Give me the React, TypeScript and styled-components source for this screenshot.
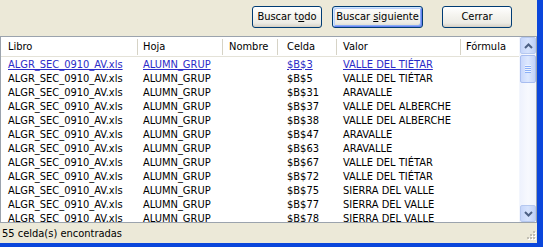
import React from 'react';
import styled, { createGlobalStyle, css } from 'styled-components';

const GlobalStyle = createGlobalStyle`
  html, body {
    margin: 0;
    padding: 0;
    background: #0a46db;
  }
  body {
    font-family: "DejaVu Sans Condensed", "DejaVu Sans", sans-serif;
    font-size: 11px;
  }
`;

const vars = {
  face: '#ece9d8',
  text: '#000000',
  link: '#2b2bc8',
  listBorder: '#9ba3ad',
  headSep: '#d6d3c6',
  frame: '#0a46db',
};

type Col = { w: number; pl: number };

const COLS: Col[] = [
  { w: 137, pl: 7 },
  { w: 85, pl: 5 },
  { w: 55, pl: 6 },
  { w: 59, pl: 9 },
  { w: 124, pl: 6 },
  { w: 58, pl: 5 },
];

const gridCols = COLS.map((c) => `${c.w}px`).join(' ');

const Frame = styled.div`
  width: 543px;
  height: 247px;
  box-sizing: border-box;
  border-right: 6px solid ${vars.frame};
  border-bottom: 4px solid ${vars.frame};
  background: ${vars.face};
  display: flex;
  flex-direction: column;
  overflow: hidden;
`;

const Toolbar = styled.div`
  height: 36px;
  box-sizing: border-box;
  padding: 6px 25px 0 0;
  display: flex;
  justify-content: flex-end;
  align-items: flex-start;
  gap: 10px;
`;

const Button = styled.button<{ $w: number; $focused?: boolean; $spaced?: boolean }>`
  width: ${(p) => p.$w}px;
  height: 22px;
  box-sizing: border-box;
  margin: 0 0 0 ${(p) => (p.$spaced ? '9px' : '0')};
  padding: 0 0 1px;
  font: inherit;
  color: ${vars.text};
  border: 1px solid #003c74;
  border-radius: 3px;
  background: linear-gradient(#ffffff 0%, #f4f3ee 45%, #ecebe5 80%, #d6d0c5 100%);
  box-shadow: inset 0 -1px 0 #d6d0c5;
  ${(p) =>
    p.$focused &&
    css`
      box-shadow: inset 1px 1px 0 #cee7ff, inset -1px -1px 0 #6982ee, inset 2px 2px 0 #bccffa,
        inset -2px -2px 0 #89adf6;
    `}
  u {
    text-decoration: underline;
  }
`;

const List = styled.div`
  width: 537px;
  height: 187px;
  box-sizing: border-box;
  border: 1px solid ${vars.listBorder};
  background: #ffffff;
  display: flex;
  overflow: hidden;
`;

const ListMain = styled.div`
  flex: 1;
  display: flex;
  flex-direction: column;
  overflow: hidden;
`;

const HeaderRow = styled.div`
  height: 20px;
  flex: none;
  display: grid;
  grid-template-columns: ${gridCols};
  border-bottom: 1px solid #e4e2d8;
  box-sizing: border-box;
`;

const HeadCell = styled.div<{ $pl: number; $last?: boolean }>`
  padding-left: ${(p) => p.$pl}px;
  line-height: 19px;
  white-space: nowrap;
  overflow: hidden;
  position: relative;
  ${(p) =>
    !p.$last &&
    css`
      &::after {
        content: '';
        position: absolute;
        right: 0;
        top: 2px;
        bottom: 1px;
        width: 1px;
        background: ${vars.headSep};
      }
    `}
`;

const Body = styled.div`
  padding-top: 1px;
  display: grid;
  grid-auto-rows: 14px;
`;

const Row = styled.div`
  display: grid;
  grid-template-columns: ${gridCols};
`;

const Cell = styled.div<{ $pl: number; $link?: boolean }>`
  padding-left: ${(p) => p.$pl}px;
  line-height: 14px;
  white-space: nowrap;
  overflow: hidden;
  color: ${(p) => (p.$link ? vars.link : vars.text)};
  text-decoration: ${(p) => (p.$link ? 'underline' : 'none')};
`;

const ScrollBar = styled.div`
  width: 17px;
  flex: none;
  display: flex;
  flex-direction: column;
  background: linear-gradient(90deg, #eef2fd 0%, #f7f9fe 50%, #eef3fd 100%);
  border-left: 1px solid #f3f6fd;
  box-sizing: border-box;
`;

const ScrollButton = styled.div`
  width: 16px;
  height: 17px;
  flex: none;
  box-sizing: border-box;
  border: 1px solid #b5c8f0;
  border-radius: 2px;
  background: linear-gradient(90deg, #c6d6fb 0%, #d6e3fd 50%, #bfd0f6 100%);
  display: flex;
  align-items: center;
  justify-content: center;
`;

const Thumb = styled(ScrollButton)`
  height: 28px;
  margin-top: 1px;
  border-color: #a8bdf0;
  background: linear-gradient(90deg, #c9d8fc 0%, #dde8fe 50%, #c3d3f9 100%);
`;

const Track = styled.div`
  flex: 1;
`;

const StatusBar = styled.div`
  flex: 1;
  display: flex;
  align-items: center;
  padding: 0 1px 0 2px;
  position: relative;
`;

const StatusText = styled.span`
  color: ${vars.text};
  margin-top: 1px;
`;

const Grip = styled.svg`
  position: absolute;
  right: 1px;
  bottom: 1px;
`;

const Chevron: React.FC<{ down?: boolean }> = ({ down }) => (
  <svg width="9" height="6" viewBox="0 0 9 6">
    <path
      d={down ? 'M1 1 L4.5 4.5 L8 1' : 'M1 5 L4.5 1.5 L8 5'}
      fill="none"
      stroke="#4d6185"
      strokeWidth="2"
    />
  </svg>
);

const GripLines: React.FC = () => (
  <svg width="8" height="8" viewBox="0 0 8 8">
    {[1, 3, 5, 7].map((y) => (
      <g key={y}>
        <rect x="1" y={y - 1} width="6" height="1" fill="#eef4fe" />
        <rect x="1" y={y} width="6" height="1" fill="#8cb0f8" />
      </g>
    ))}
  </svg>
);

type Item = { cell: string; value: string };

const ITEMS: Item[] = [
  { cell: '$B$3', value: 'VALLE DEL TIÉTAR' },
  { cell: '$B$5', value: 'VALLE DEL TIÉTAR' },
  { cell: '$B$31', value: 'ARAVALLE' },
  { cell: '$B$37', value: 'VALLE DEL ALBERCHE' },
  { cell: '$B$38', value: 'VALLE DEL ALBERCHE' },
  { cell: '$B$47', value: 'ARAVALLE' },
  { cell: '$B$63', value: 'ARAVALLE' },
  { cell: '$B$67', value: 'VALLE DEL TIÉTAR' },
  { cell: '$B$72', value: 'VALLE DEL TIÉTAR' },
  { cell: '$B$75', value: 'SIERRA DEL VALLE' },
  { cell: '$B$77', value: 'SIERRA DEL VALLE' },
  { cell: '$B$78', value: 'SIERRA DEL VALLE' },
];

const HEADERS = ['Libro', 'Hoja', 'Nombre', 'Celda', 'Valor', 'Fórmula'];

const GRIP_DOTS = [
  [8, 0],
  [5, 3],
  [8, 3],
  [2, 6],
  [5, 6],
  [8, 6],
];

const App: React.FC = () => {
  return (
    <Frame>
      <GlobalStyle />
      <Toolbar>
        <Button $w={70}>
          Buscar t<u>o</u>do
        </Button>
        <Button $w={91} $focused>
          Buscar <u>s</u>iguiente
        </Button>
        <Button $w={70} $spaced>
          Cerrar
        </Button>
      </Toolbar>

      <List>
        <ListMain>
          <HeaderRow>
            {HEADERS.map((h, i) => (
              <HeadCell key={h} $pl={COLS[i].pl} $last={i === HEADERS.length - 1}>
                {h}
              </HeadCell>
            ))}
          </HeaderRow>
          <Body>
            {ITEMS.map((it, i) => {
              // first hit is the hot-tracked row, drawn as links
              const link = i === 0;
              const values = ['ALGR_SEC_0910_AV.xls', 'ALUMN_GRUP', '', it.cell, it.value, ''];
              return (
                <Row key={it.cell}>
                  {values.map((v, j) => (
                    <Cell key={j} $pl={COLS[j].pl} $link={link && v !== ''}>
                      {v}
                    </Cell>
                  ))}
                </Row>
              );
            })}
          </Body>
        </ListMain>
        <ScrollBar>
          <ScrollButton>
            <Chevron />
          </ScrollButton>
          <Thumb>
            <GripLines />
          </Thumb>
          <Track />
          <ScrollButton>
            <Chevron down />
          </ScrollButton>
        </ScrollBar>
      </List>

      <StatusBar>
        <StatusText>55 celda(s) encontradas</StatusText>
        <Grip width="11" height="11" viewBox="0 0 11 11">
          {GRIP_DOTS.map(([x, y]) => (
            <g key={`${x}-${y}`}>
              <rect x={x + 1} y={y + 1} width="2" height="2" fill="#ffffff" />
              <rect x={x} y={y} width="2" height="2" fill="#c1beb3" />
            </g>
          ))}
        </Grip>
      </StatusBar>
    </Frame>
  );
};

export default App;
